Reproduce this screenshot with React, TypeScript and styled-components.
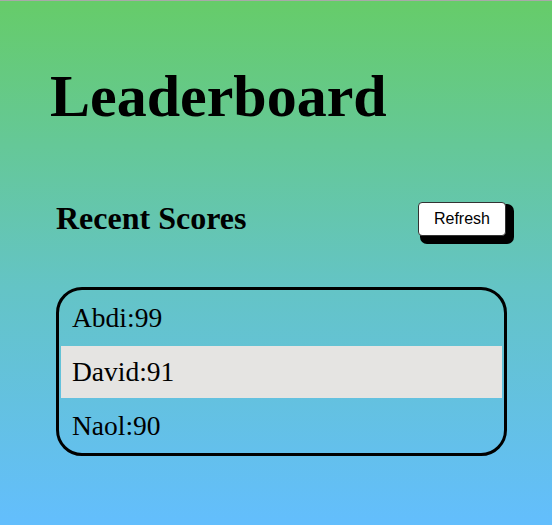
import React from "react";
import styled, { createGlobalStyle } from "styled-components";

const GlobalStyle = createGlobalStyle`
  html, body { margin: 0; padding: 0; }
  body { font-family: "Liberation Serif", "Times New Roman", serif; }
`;

const Page = styled.div`
  box-sizing: border-box;
  min-height: 525px;
  border-top: 1px solid #a9a9a9;
  background: linear-gradient(180deg, #66cc69 0%, #64c4c6 55%, #63befd 100%);
  padding: 61px 45px 40px 50px;
`;

const Title = styled.h1`
  margin: 0;
  font-size: 60px;
  font-weight: 700;
  line-height: normal;
  color: #000;
`;

const Section = styled.section`
  margin: 69px 0 0 6px;
`;

const HeaderRow = styled.div`
  display: flex;
  align-items: center;
  justify-content: space-between;
  padding-right: 1px;
`;

const SubTitle = styled.h2`
  margin: 0;
  font-size: 32px;
  font-weight: 700;
  line-height: normal;
  color: #000;
`;

const RefreshButton = styled.button`
  font-family: "Liberation Sans", Arial, sans-serif;
  font-size: 16px;
  line-height: normal;
  color: #000;
  background: #fff;
  border: 1px solid #333;
  border-radius: 4px;
  padding: 7px 15px;
  box-shadow: 5px 5px 0 3px #000;
  cursor: pointer;
`;

const ScoreList = styled.ul`
  list-style: none;
  margin: 50px 0 0 0;
  padding: 2px 2px 1px;
  border: 3px solid #000;
  border-radius: 26px;
  display: flex;
  flex-direction: column;
  gap: 2px;
`;

const ScoreRow = styled.li<{ $highlight?: boolean }>`
  height: 52px;
  line-height: 52px;
  padding-left: 11px;
  font-size: 27.5px;
  color: #000;
  background: ${(p) => (p.$highlight ? "#e5e4e2" : "transparent")};
`;

const scores = [
  { name: "Abdi", score: 99 },
  { name: "David", score: 91 },
  { name: "Naol", score: 90 },
];

export default function App() {
  return (
    <>
      <GlobalStyle />
      <Page>
        <Title>Leaderboard</Title>
        <Section>
          <HeaderRow>
            <SubTitle>Recent Scores</SubTitle>
            <RefreshButton>Refresh</RefreshButton>
          </HeaderRow>
          <ScoreList>
            {scores.map((s, i) => (
              <ScoreRow key={s.name} $highlight={i === 1}>
                {s.name}:{s.score}
              </ScoreRow>
            ))}
          </ScoreList>
        </Section>
      </Page>
    </>
  );
}
